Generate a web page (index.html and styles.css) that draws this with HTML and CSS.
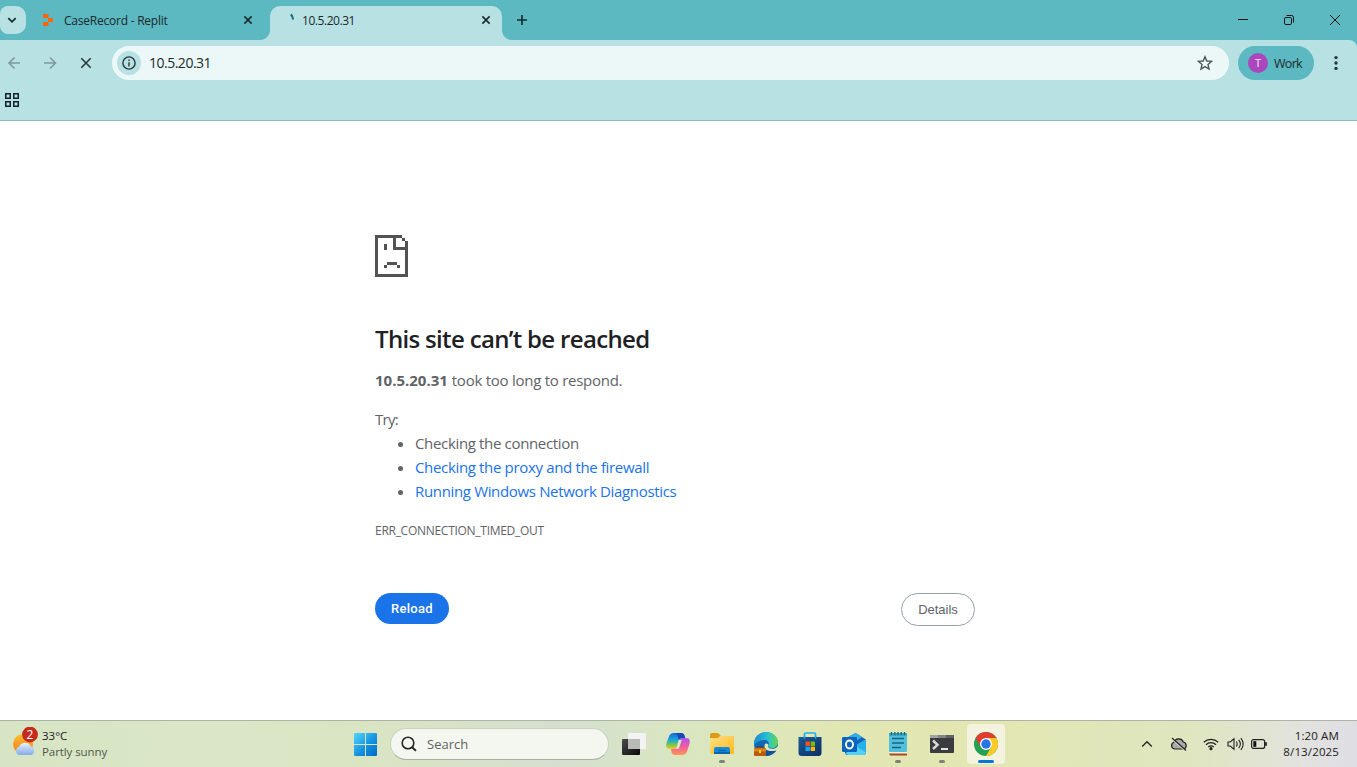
FILE: index.html
```html
<!DOCTYPE html>
<html lang="en">
<head>
<meta charset="utf-8">
<title>10.5.20.31</title>
<link rel="stylesheet" href="styles.css">
</head>
<body>
<div class="screen">
  <header class="tabstrip">
    <button class="tab-search" aria-label="Search tabs"><svg width="26" height="28" viewBox="0 0 26 28"><path d="M8.300 12.200l3.700 3.600 3.700-3.600" fill="none" stroke="#16292c" stroke-width="1.700"/></svg></button>
    <div class="tab tab-idle">
      <svg class="favicon" width="12" height="14" viewBox="0 0 12 14" fill="#fc6404"><rect x="1" y="1" width="5.500" height="4" rx=".8"/><rect x="6" y="5" width="5" height="4" rx=".8"/><rect x="1" y="9" width="5.500" height="4" rx=".8"/></svg>
      <span class="tab-title idle-title">CaseRecord - Replit</span>
      <svg class="close" width="10" height="10" viewBox="0 0 10 10"><path d="M1.400 1.400l7.200 7.200M8.600 1.400L1.400 8.600" stroke="#1b2a2c" stroke-width="1.600"/></svg>
    </div>
    <div class="tab tab-active">
      <svg class="spinner" width="16" height="16" viewBox="0 0 16 16"><path d="M5.900 2.300Q7.800 4.300 8 7.500" fill="none" stroke="#0d7078" stroke-width="2"/></svg>
      <span class="tab-title active-title">10.5.20.31</span>
      <svg class="close" width="10" height="10" viewBox="0 0 10 10"><path d="M1.400 1.400l7.200 7.200M8.600 1.400L1.400 8.600" stroke="#1b2a2c" stroke-width="1.600"/></svg>
    </div>
    <svg class="new-tab" width="12" height="12" viewBox="0 0 12 12"><path d="M6 1v10M1 6h10" stroke="#16292c" stroke-width="1.600"/></svg>
    <div class="window-controls">
      <svg width="46" height="40" viewBox="0 0 46 40"><path d="M18 19.500h10" stroke="#111"/></svg>
      <svg width="46" height="40" viewBox="0 0 46 40" fill="none" stroke="#111"><rect x="18.500" y="17.500" width="7" height="7" rx="1.300"/><path d="M20.500 15.500h5a2 2 0 0 1 2 2v5"/></svg>
      <svg width="46" height="40" viewBox="0 0 46 40"><path d="M18 15l10 10M28 15L18 25" stroke="#111"/></svg>
    </div>
  </header>
  <div class="toolbar">
    <div class="nav">
      <svg width="36" height="34" viewBox="-4 0 36 34" fill="none" stroke="#7f999d" stroke-width="1.600"><path d="M16 17H5M10.500 11.500L5 17l5.500 5.500"/></svg>
      <svg width="36" height="34" viewBox="0 0 36 34" fill="none" stroke="#7f999d" stroke-width="1.600"><path d="M8 17h11.500M14 11.500l5.500 5.500-5.500 5.500"/></svg>
      <svg width="36" height="34" viewBox="0 0 36 34"><path d="M9.300 12.300l9.400 9.400M18.700 12.300l-9.400 9.400" stroke="#26383a" stroke-width="1.600"/></svg>
    </div>
    <div class="omnibox">
      <span class="site-info"><svg width="14" height="14" viewBox="0 0 14 14"><circle cx="7" cy="7" r="6.100" fill="none" stroke="#26383a" stroke-width="1.400"/><path d="M7 6.200v4.200M7 3.500V5" stroke="#26383a" stroke-width="1.400"/></svg></span>
      <span class="url">10.5.20.31</span>
      <svg class="star" width="16" height="16" viewBox="0 0 16 16"><path d="M8 1.700l1.800 4.300 4.700.4-3.500 3.100 1 4.500-4-2.400L4 14l1-4.500-3.500-3.100 4.700-.4z" fill="none" stroke="#4b5658" stroke-width="1.400"/></svg>
    </div>
    <div class="profile"><span class="avatar">T</span><span class="profile-name">Work</span></div>
    <svg class="menu" width="6" height="16" viewBox="0 0 6 16" fill="#26383a"><circle cx="3" cy="2.600" r="1.700"/><circle cx="3" cy="8" r="1.700"/><circle cx="3" cy="13.400" r="1.700"/></svg>
  </div>
  <div class="bookmarks">
    <svg width="14" height="14" viewBox="0 0 14 14" fill="none" stroke="#16202a" stroke-width="1.500"><path d="M.75.75h4.500v4.500H.75zM8.750.75h4.500v4.500h-4.500zM.75 8.750h4.500v4.500H.75zM8.750 8.750h4.500v4.500h-4.500z"/></svg>
  </div>
  <main class="page">
    <div class="error">
      <svg class="sad-page" width="33" height="42" viewBox="0 0 11 14" fill="#535353" shape-rendering="crispEdges"><path d="M0 0h9v1H7v3h3V2h1v12H0V0zm1 1v12h9V5H6V1zM9 1h1v1H9zM3 3h1v2H3zM4 9h3.333v1H4zM3 10h1v1H3zM7.333 10h1v1h-1z" fill-rule="evenodd"/></svg>
      <h1 class="heading">This site can’t be reached</h1>
      <p class="summary"><strong class="host">10.5.20.31</strong> <span class="reason">took too long to respond.</span></p>
      <p class="try">Try:</p>
      <ul class="suggestions">
        <li><span class="suggestion">Checking the connection</span></li>
        <li><a class="suggestion">Checking the proxy and the firewall</a></li>
        <li><a class="suggestion">Running Windows Network Diagnostics</a></li>
      </ul>
      <p class="code">ERR_CONNECTION_TIMED_OUT</p>
      <div class="actions"><button class="reload">Reload</button><button class="details">Details</button></div>
    </div>
  </main>
  <footer class="taskbar">
    <div class="weather">
      <svg width="28" height="34" viewBox="0 0 28 34">
        <defs><linearGradient id="sun" x2="0" y2="1"><stop stop-color="#ffc130"/><stop offset="1" stop-color="#ee781f"/></linearGradient><linearGradient id="cloud" x2="0" y2="1"><stop stop-color="#e6f3ff"/><stop offset="1" stop-color="#86a9e8"/></linearGradient></defs>
        <circle cx="11" cy="17" r="10" fill="url(#sun)"/><path d="M7 28a4.500 4.500 0 0 1 .2-8.500 6.500 6.500 0 0 1 11.800 0A4.400 4.400 0 0 1 19 28z" fill="url(#cloud)"/><circle cx="18" cy="7.500" r="7.900" fill="#c42b1c"/><text class="badge" x="18" y="11.500" text-anchor="middle">2</text>
      </svg>
      <div class="weather-text"><div class="temp">33°C</div><div class="cond">Partly sunny</div></div>
    </div>
    <div class="apps">
      <div class="app start"><svg width="23" height="23" viewBox="0 0 23 23"><defs><linearGradient id="win" x2="1" y2="1"><stop stop-color="#55d4fc"/><stop offset=".55" stop-color="#1593e0"/><stop offset="1" stop-color="#0069c8"/></linearGradient></defs><path d="M1 0h10v11H0V1a1 1 0 0 1 1-1zM12 0h10a1 1 0 0 1 1 1v10H12zM0 12h11v11H1a1 1 0 0 1-1-1zM12 12h11v10a1 1 0 0 1-1 1H12z" fill="url(#win)"/></svg></div>
      <div class="search"><svg width="16" height="16" viewBox="0 0 16 16"><circle cx="7" cy="7" r="5.800" fill="none" stroke="#252525" stroke-width="1.600"/><path d="M11.200 11.200l3.700 3.700" stroke="#252525" stroke-width="2"/></svg><span class="search-text">Search</span></div>
      <div class="app"><svg width="26" height="26" viewBox="0 0 26 26"><defs><linearGradient id="dk" x2="1" y2="1"><stop stop-color="#4b4b4b"/><stop offset="1" stop-color="#090909"/></linearGradient></defs><rect x="1" y="8" width="18" height="16" rx="1" fill="url(#dk)"/><rect x="7" y="2" width="18" height="16" rx="1" fill="#f3f3f3"/><path d="M7 8h12v10H8a1 1 0 0 1-1-1z" fill="#b9bbb9"/></svg></div>
      <div class="app"><svg width="26" height="26" viewBox="0 0 26 26"><defs><linearGradient id="cp1" x2="0" y2="1"><stop stop-color="#1765dd"/><stop offset=".45" stop-color="#17acd5"/><stop offset=".75" stop-color="#7fc64b"/><stop offset="1" stop-color="#f2cf1b"/></linearGradient><linearGradient id="cp2" x2="0" y2="1"><stop stop-color="#aa58ed"/><stop offset=".5" stop-color="#f35ba0"/><stop offset="1" stop-color="#ff9752"/></linearGradient></defs><path d="M9 2h7c2 0 3 1 3.600 3l.6 2h-3c-2 0-3 1-3.600 3l-1.500 5c-.7 2-1.600 3-3.600 3H5c-4 0-4.300-3-3.400-6L3.800 6C4.600 3.400 6.300 2 9 2z" fill="url(#cp1)"/><path d="M17 24h-7c-2 0-3-1-3.500-3L6 18h2.600c2 0 3-1 3.600-3l1.500-5c.6-2 1.600-3 3.600-3H21c4 0 4.300 3 3.400 6l-2.200 7c-.8 2.600-2.500 4-5.200 4z" fill="url(#cp2)"/><path d="M16 2c2 0 3 1 3.600 3l.6 2h-3c-1.600 0-2.600.7-3.200 2L12.500 4.500C12 3 11 2 9 2z" fill="#1549b7"/><path d="M13.700 9h3l-2.400 7.500q-.5 1.500-2 1.500h-2q1.200-1 1.600-2.500z" fill="#dce8c6"/></svg></div>
      <div class="app"><svg width="26" height="26" viewBox="0 0 26 26"><defs><linearGradient id="fold" x2="1" y2="1"><stop stop-color="#ffe18b"/><stop offset="1" stop-color="#ffb916"/></linearGradient></defs><path d="M1 4a2 2 0 0 1 2-2h6l3 3h12a1 1 0 0 1 1 1v6H1z" fill="#dc9b12"/><path d="M1 7h8l2-2h13a1 1 0 0 1 1 1v16a1 1 0 0 1-1 1H2a1 1 0 0 1-1-1z" fill="url(#fold)"/><path d="M5 23v-5a2 2 0 0 1 2-2h12a2 2 0 0 1 2 2v5z" fill="#1589d8"/><path d="M5 21h16v2H5z" fill="#0b63ac"/><path d="M9 19.500h8" stroke="#0b63ac" stroke-width="1.300"/></svg><i class="dot"></i></div>
      <div class="app"><svg width="26" height="26" viewBox="0 0 26 26"><defs><linearGradient id="edge" x2="1"><stop stop-color="#148bd3"/><stop offset=".55" stop-color="#29bfd4"/><stop offset="1" stop-color="#66d650"/></linearGradient></defs><circle cx="13" cy="13" r="12" fill="#1267b4"/><path d="M1 12C2 5 7 1 13 1c7 0 12 5 12 10 0 4-3 6-6 6-3.500 0-4.500-1.500-3.600-3 1.300-3-1-5-3.700-5C7 9 3 11 1 15z" fill="url(#edge)"/><path d="M11.500 14c-1 5 4 8 9 7 1.800-.3 3-1 3.800-2l1 .3v-4.600c-2 2.500-4 3-6.200 3-3.500 0-4.800-1.700-3.800-3.700-.8-2-3-2-3.800 0z" fill="#dce8b9"/><path d="M11.500 14c-1 4 3 7.500 12 5.500-2 3-6.500 5.200-10.500 5.500z" fill="#104f9a"/><rect x="1" y="17" width="12" height="8" rx="1" fill="#b85c0c"/><path d="M1 17.500h12v3H1z" fill="#d9841c"/><path d="M4.500 17v-1.500h5V17" fill="none" stroke="#7b3b08" stroke-width="1.200"/><rect x="6" y="19" width="2" height="3" fill="#ffc94d"/></svg></div>
      <div class="app"><svg width="26" height="26" viewBox="0 0 26 26"><defs><linearGradient id="bag" x2="1" y2="1"><stop stop-color="#1b5c96"/><stop offset="1" stop-color="#0d2e67"/></linearGradient></defs><path d="M7.500 8V3a1 1 0 0 1 1-1h9a1 1 0 0 1 1 1v5" fill="none" stroke="#25aeea" stroke-width="1.700"/><path d="M1.500 6h23v16a3 3 0 0 1-3 3h-17a3 3 0 0 1-3-3z" fill="url(#bag)"/><path d="M7.500 5v2.500M18.500 5v2.500" stroke="#25aeea" stroke-width="1.700"/><path d="M8.500 10.500H13V15H8.500z" fill="#f25022"/><path d="M13.700 10.500H18V15h-4.300z" fill="#7fba00"/><path d="M8.500 15.700H13V20H8.500z" fill="#18a5ef"/><path d="M13.700 15.700H18V20h-4.300z" fill="#ffb900"/></svg></div>
      <div class="app"><svg width="26" height="26" viewBox="0 0 26 26"><path d="M4 8l9-5.300a3 3 0 0 1 3 0L24 8a2 2 0 0 1 1 2v11a3 3 0 0 1-3 3H7a3 3 0 0 1-3-3z" fill="#1463b6"/><path d="M5 7l8.500-4.600a2 2 0 0 1 2 0L21 6l-7 5H5z" fill="#31aee8"/><path d="M15 14l10-6v12a4 4 0 0 1-4 4H8a4 4 0 0 1-3-2z" fill="#25b0ec"/><path d="M15 15l10 6.500a3 3 0 0 1-3 2.500H8a4 4 0 0 1-3-2z" fill="#50d1f5"/><path d="M15 11l10-6v4l-10 6z" fill="#1258a6" opacity="0"/><rect x="1" y="6" width="15" height="15" rx="1.200" fill="#0b65bc"/><ellipse cx="8.500" cy="13.500" rx="3.500" ry="4" fill="none" stroke="#fff" stroke-width="1.900"/></svg></div>
      <div class="app"><svg width="26" height="26" viewBox="0 0 26 26"><path d="M4 22h18v2.500H5z" fill="#a44b1c"/><path d="M4 20h18v2.500H4z" fill="#f5eedc"/><rect x="4" y="2" width="18" height="19" rx="1" fill="#52bfdd"/><path d="M4 2h18v3H4z" fill="#39a9c6"/><path d="M6.500 1v3M9.800 1v3M13 1v3M16.200 1v3M19.500 1v3" stroke="#17617a" stroke-width="1.300"/><path d="M7 7.500h12M7 12h12M7 16.500h9" stroke="#146583" stroke-width="1.600"/></svg><i class="dot"></i></div>
      <div class="app"><svg width="26" height="26" viewBox="0 0 26 26"><rect x="1" y="4" width="24" height="18" rx="1" fill="#393b3d"/><path d="M1 7V5a1 1 0 0 1 1-1h15v3z" fill="#a1a4a6"/><path d="M9 4h8v3H9z" fill="#828587"/><path d="M17 4h7a1 1 0 0 1 1 1v2h-8z" fill="#606365"/><path d="M4 9.500l4.500 4.300L4 18" fill="none" stroke="#d5d7d8" stroke-width="2.500"/><path d="M12 18h7" stroke="#fff" stroke-width="1.700"/></svg><i class="dot"></i></div>
      <div class="app current"><svg width="26" height="26" viewBox="0 0 26 26"><circle cx="13" cy="13" r="12" fill="#22a150"/><path d="M2.600 7A12 12 0 0 1 23.400 7H13L7.800 16z" fill="#e33b2e"/><path d="M23.400 7A12 12 0 0 1 13 25l5.200-9L13 7z" fill="#ffca26"/><circle cx="13" cy="13" r="6" fill="#fff"/><circle cx="13" cy="13" r="4.700" fill="#2675e8"/></svg><i class="dot active-dot"></i></div>
    </div>
    <div class="tray">
      <svg width="12" height="8" viewBox="0 0 12 8"><path d="M1.200 6.500L6 1.700l4.800 4.800" fill="none" stroke="#222" stroke-width="1.300"/></svg>
      <svg class="cloud-icon" width="18" height="16" viewBox="0 0 18 16"><path d="M4.500 13a3.500 3.500 0 0 1-.5-6.800A5 5 0 0 1 13.300 6 3.600 3.600 0 0 1 13.500 13z" fill="#a9aaab" stroke="#222" stroke-width="1.200"/><path d="M2.300 3.100L15 14.400" stroke="#e4ead0" stroke-width="1.500"/><path d="M2 2l14 12.500" stroke="#222" stroke-width="1.200"/></svg>
      <svg class="wifi" width="16" height="14" viewBox="0 0 16 14" fill="none" stroke="#222" stroke-width="1.200"><path d="M.8 5.200a10.500 10.500 0 0 1 14.400 0M3 7.700a7.200 7.200 0 0 1 10 0M5.300 10a4 4 0 0 1 5.400 0"/><circle cx="8" cy="11.700" r="1" fill="#222"/></svg>
      <svg class="volume" width="17" height="14" viewBox="0 0 17 14" fill="none" stroke="#222" stroke-width="1.100"><path d="M1 5h2.200L7 1.800v10.400L3.200 9H1zM9.300 4.500c1 1.500 1 3.500 0 5M11.700 2.800c2 2.500 2 5.900 0 8.400M13.900 1.200c2.800 3.600 2.800 8 0 11.600"/></svg>
      <svg class="battery" width="17" height="10" viewBox="0 0 17 10"><rect x=".6" y=".6" width="13" height="8.800" rx="2" fill="none" stroke="#222" stroke-width="1.200"/><path d="M2.300 2.200h3v5.600h-3z" fill="#111"/><path d="M15 3.200v3.600" stroke="#222" stroke-width="1.800"/></svg>
      <div class="clock"><div class="time">1:20 AM</div><div class="date">8/13/2025</div></div>
    </div>
  </footer>
</div>
</body>
</html>
```
FILE: styles.css
```css
* { box-sizing: border-box; }
body { margin: 0; font-family: "Open Sans", "Noto Sans", sans-serif; font-size: 12px; color: #1b2a2c; overflow: hidden; }
svg { display: block; flex: none; }
button { font: inherit; border: 0; padding: 0; }
.screen { width: 1357px; height: 767px; display: flex; flex-direction: column; background: #fff; }
span, .heading, .temp, .cond, .time, .date, .code, .try { white-space: nowrap; }

.tabstrip { height: 40px; flex: none; display: flex; background: #5cb8c1; }
.tab-search { width: 26px; height: 28px; margin-top: 6px; border-radius: 8px 10px 10px 8px; background: #b8e1e4; }
.tab { display: flex; align-items: center; height: 34px; margin-top: 6px; padding-bottom: 6px; }
.tab-idle { width: 244px; padding-left: 16px; padding-right: 17px; }
.tab-title { flex: 1; }
.idle-title { letter-spacing: -.23px; }
.active-title { letter-spacing: -.45px; }
.favicon { margin-right: 10px; }
.tab-active { position: relative; width: 232px; padding-left: 15px; padding-right: 11px; background: #b8e1e4; border-radius: 10px 10px 0 0; }
.tab-active::before, .tab-active::after { content: ""; position: absolute; bottom: 0; width: 10px; height: 10px; }
.tab-active::before { left: -10px; background: radial-gradient(circle at 0 0, transparent 9.500px, #b8e1e4 10.500px); }
.tab-active::after { right: -10px; background: radial-gradient(circle at 100% 0, transparent 9.500px, #b8e1e4 10.500px); }
.spinner { margin-right: 1px; }
.new-tab { margin: 14px 0 0 14px; }
.window-controls { display: flex; margin-left: auto; margin-right: -1px; }

.toolbar { height: 40px; flex: none; display: flex; align-items: flex-end; background: #b8e1e4; border-top-right-radius: 8px; box-shadow: 8px -8px 0 0 #5cb8c1; clip-path: inset(0); }
.nav { display: flex; width: 112px; }
.omnibox { width: 1117px; height: 34px; border-radius: 17px; background: #ecf8f8; display: flex; align-items: center; padding: 0 16px 0 5px; }
.site-info { width: 24px; height: 24px; border-radius: 50%; background: #b8e1e4; display: grid; place-items: center; }
.url { flex: 1; margin-left: 8px; padding-bottom: 1px; font-size: 14px; letter-spacing: -.5px; }
.profile { width: 76px; height: 34px; margin-left: 9px; border-radius: 17px; background: #5cb8c1; display: flex; align-items: center; padding-left: 10px; }
.avatar { width: 20px; height: 20px; border-radius: 50%; background: #ab47bc; color: #f6dff9; display: grid; place-items: center; font: 11px Roboto, sans-serif; }
.profile-name { margin-left: 6px; font-size: 12.500px; letter-spacing: -.7px; word-spacing: 0; }
.menu { margin: 0 0 9px 19px; }
.bookmarks { height: 41px; flex: none; background: #b8e1e4; border-bottom: 1px solid #93b6bc; padding: 13px 5px; }

.page { height: 599px; flex: none; display: flex; justify-content: center; padding-right: 7px; color: #5f6368; font-size: 15px; line-height: 24px; }
.error { width: 600px; padding-top: 114px; }
.heading { margin: 47px 0 0; font-size: 24px; font-weight: 600; line-height: 30px; letter-spacing: -.67px; color: #202124; }
.summary { margin: 14px 0 0; }
.reason { letter-spacing: -.26px; }
.try { margin: 15px 0 0; letter-spacing: -.7px; }
.suggestions { margin: 0; padding-left: 40px; }
.suggestion { white-space: nowrap; letter-spacing: -.34px; }
.suggestions a { color: #1a73e8; }
.code { margin: 16px 0 0; font-size: 12px; letter-spacing: -.28px; }
.actions { display: flex; justify-content: space-between; margin-top: 50px; }
.reload, .details { width: 74px; height: 31px; border-radius: 17px; font: 13px "Liberation Sans", sans-serif; }
.reload { background: #1a73e8; color: #fff; font-family: Roboto, sans-serif; font-weight: 500; letter-spacing: .3px; }
.details { height: 33px; background: #fff; border: 1px solid #9aa0a6; color: #5f6368; }

.taskbar { height: 47px; flex: none; display: flex; align-items: center; border-top: 1px solid #aeb4a5; background: linear-gradient(90deg, #d7e5c4 0, #dae6c6 14%, #d9e5c2 27%, #d5dfd0 41%, #d9e6c1 50%, #e1e7b3 62%, #e3e7b2 73%, #dfe6c0 88%, #e2e2df 96%, #dfdee4 100%); color: #202020; }
.weather { width: 343px; display: flex; align-items: center; padding-left: 12px; }
.badge { font: 12px "Open Sans", sans-serif; fill: #fff; }
.weather-text { margin-left: 2px; line-height: 16px; font-size: 11.500px; }
.cond { color: #515849; letter-spacing: -.08px; }
.apps { display: flex; align-items: center; }
.app { position: relative; width: 38px; height: 40px; margin: 0 3px; display: grid; place-items: center; }
.search { width: 219px; height: 32px; margin: 0 3px; border: 1px solid #cbd0c3; border-bottom-color: #a9afa1; border-radius: 16px; background: #f4f6f0; display: flex; align-items: center; padding-left: 10px; gap: 10px; color: #60645f; font-size: 13px; }
.dot { position: absolute; bottom: 1px; left: 16px; width: 6px; height: 3px; border-radius: 2px; background: #7e8377; }
.current { background: #f3f3df; border-radius: 4px; }
.active-dot { left: 11px; bottom: 1px; width: 16px; background: #0078d4; }
.tray { margin-left: auto; display: flex; align-items: center; padding-right: 18px; }
.cloud-icon { margin-left: 17px; }
.wifi { margin-left: 15px; }
.volume { margin-left: 8px; }
.battery { margin-left: 7px; }
.clock { width: 71px; text-align: right; line-height: 16px; font-size: 11.500px; letter-spacing: .13px; }
```
